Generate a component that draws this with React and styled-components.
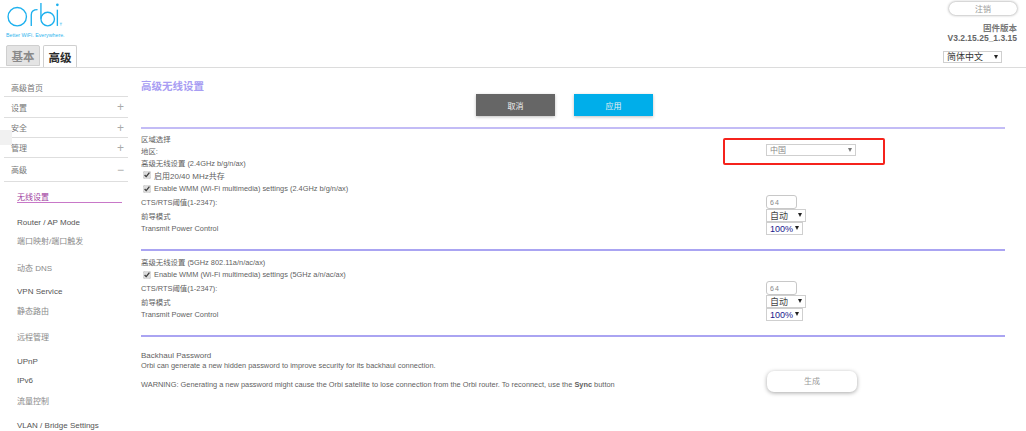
import React from 'react'
import styled, { createGlobalStyle } from 'styled-components'

const GlobalStyle = createGlobalStyle`
  html, body {
    margin: 0;
    padding: 0;
    background: #fff;
  }
  body {
    font-family: "Liberation Sans", "Noto Sans CJK SC", sans-serif;
    color: #5f5f5f;
  }
`

const Page = styled.div`
  width: 1026px;
  height: 431px;
  overflow: hidden;
  position: relative;
  background: #fff;
`

const Header = styled.header`
  height: 67px;
  border-bottom: 1px solid #dcdcdc;
  display: flex;
  justify-content: space-between;
`

const Brand = styled.div`
  display: flex;
  flex-direction: column;
  padding-left: 6px;
`

const Tagline = styled.span`
  font-size: 5.3px;
  line-height: 6px;
  color: #2fb5ee;
  margin-top: 3px;
  white-space: nowrap;
`

const Tabs = styled.div`
  display: flex;
  gap: 3px;
  margin-top: 7px;
`

const Tab = styled.div`
  width: 34px;
  height: ${(props) => (props.$active ? '22px' : '21px')};
  box-sizing: border-box;
  border: 1px solid #cfcfcf;
  border-bottom: ${(props) => (props.$active ? 'none' : '1px solid #cfcfcf')};
  border-radius: 2px 2px 0 0;
  background: ${(props) => (props.$active ? '#fff' : '#e4e4e4')};
  color: ${(props) => (props.$active ? '#2a2a2a' : '#8a8a8a')};
  font-size: 11.5px;
  font-weight: bold;
  display: flex;
  align-items: center;
  justify-content: center;
`

const TopRight = styled.div`
  width: 90px;
  display: flex;
  flex-direction: column;
  align-items: flex-end;
  padding: 2px 9px 0 0;
`

const LogoutButton = styled.div`
  width: 68px;
  height: 13px;
  border-radius: 7px;
  background: #fff;
  box-shadow: 0 0 3px rgba(0, 0, 0, 0.45);
  font-size: 8px;
  color: #999;
  display: flex;
  align-items: center;
  justify-content: center;
`

const FirmwareLabel = styled.div`
  font-size: 8.5px;
  line-height: 10px;
  font-weight: bold;
  color: #777;
  margin-top: 8px;
`

const FirmwareVersion = styled.div`
  font-size: 8.5px;
  line-height: 10px;
  font-weight: bold;
  color: #666;
  white-space: nowrap;
`

const LangSelect = styled.div`
  margin: 8px 15px 0 0;
`

const Body = styled.div`
  display: flex;
`

const Sidebar = styled.nav`
  width: 124px;
  padding: 11px 0 0 4px;
  margin-right: 13px;
  flex-shrink: 0;
`

const MenuItem = styled.div`
  height: ${(props) => props.$h}px;
  box-sizing: border-box;
  border-bottom: 1.5px solid #dedede;
  display: flex;
  align-items: center;
  justify-content: space-between;
  padding: 0 4px 0 7px;
  font-size: 8px;
  color: #777;
`

const MenuToggle = styled.span`
  font-size: 12px;
  font-weight: 300;
  color: #aaa;
`

const SubMenu = styled.div`
  padding: 8px 0 0 13px;
`

const SubItem = styled.div`
  height: 12px;
  margin-top: ${(props) => props.$gap}px;
  display: flex;
  align-items: center;
  font-size: 8px;
  color: ${(props) => (props.$zh ? '#8a8a8a' : '#555')};
  white-space: nowrap;
`

const ActiveItem = styled.div`
  height: 13px;
  box-sizing: border-box;
  margin-right: 6px;
  border-bottom: 1px solid #c878c8;
  display: flex;
  align-items: center;
  font-size: 8px;
  color: #a03ca0;
`

const CollapseHandle = styled.div`
  position: absolute;
  left: 0;
  top: 130px;
  width: 12px;
  height: 15px;
  background: #f1f1f1;
`

const Main = styled.main`
  width: 864px;
  padding-top: 11px;
`

const Title = styled.h1`
  margin: 0;
  height: 15px;
  font-size: 10.5px;
  line-height: 14px;
  font-weight: bold;
  color: #a89df3;
`

const ButtonRow = styled.div`
  display: flex;
  gap: 19px;
  padding-left: 335px;
`

const ActionButton = styled.div`
  width: 79px;
  height: 22px;
  background: ${(props) => props.$bg};
  color: #f0f0f0;
  font-size: 8px;
  display: flex;
  align-items: center;
  justify-content: center;
  box-shadow: 0 1px 3px rgba(0, 0, 0, 0.25);
`

const Rule = styled.hr`
  border: none;
  margin: ${(props) => props.$top}px 0 0;
  height: 2px;
  background: ${(props) => props.$color};
`

const Section = styled.section`
  padding-top: 3px;
`

const Row = styled.div`
  height: ${(props) => props.$h}px;
  display: grid;
  grid-template-columns: 625px 1fr;
  align-items: center;
  font-size: 7.4px;
  white-space: nowrap;
`

const CtsLabel = styled.span`
  margin-bottom: 2px;
`

const CheckLabel = styled.label`
  display: flex;
  align-items: center;
  gap: 3px;
  padding-left: 2px;
  font-size: ${(props) => props.$size || 7.4}px;
`

const Check = styled.input`
  width: 8px;
  height: 8px;
  margin: 0;
  accent-color: #dcdcdc;
`

const SelectWrap = styled.div`
  position: relative;
  width: ${(props) => props.$w}px;
  height: ${(props) => props.$h || 13}px;
`

const Select = styled.select`
  appearance: none;
  width: 100%;
  height: 100%;
  box-sizing: border-box;
  border: 1px solid #cfcfcf;
  border-radius: 0;
  background: #fff;
  color: ${(props) => props.$color || '#444'};
  font-family: inherit;
  font-size: ${(props) => props.$size || 9}px;
  padding: 0 0 0 3px;
  display: block;
`

const Arrow = styled.span`
  position: absolute;
  right: 4px;
  top: 4px;
  width: 0;
  height: 0;
  border-left: 2.5px solid transparent;
  border-right: 2.5px solid transparent;
  border-top: 4px solid ${(props) => props.$color || '#222'};
  pointer-events: none;
`

const Highlight = styled.div`
  position: absolute;
  left: -43px;
  top: -6px;
  width: 162px;
  height: 27px;
  box-sizing: border-box;
  border: 2px solid #f5231c;
  border-radius: 2px;
  pointer-events: none;
`

const TextInput = styled.input`
  width: 31px;
  height: 14px;
  box-sizing: border-box;
  border: 1px solid #c8c8c8;
  border-radius: 3px;
  font-family: inherit;
  font-size: 7px;
  letter-spacing: 1px;
  color: #888;
  padding: 0 3px;
  display: block;
`

const Backhaul = styled.section`
  display: grid;
  grid-template-columns: 626px 1fr;
  padding-top: 14px;
  font-size: 7.4px;
  line-height: 10px;
  white-space: nowrap;
`

const BackhaulTitle = styled.p`
  margin: 0;
  font-size: 8px;
`

const BackhaulNote = styled.p`
  margin: ${(props) => props.$top || 0}px 0 0;
`

const GenerateButton = styled.div`
  width: 90px;
  height: 21px;
  margin-top: 20px;
  border-radius: 7px;
  background: #fff;
  box-shadow: 0 1px 4px rgba(0, 0, 0, 0.35);
  color: #999;
  font-size: 8px;
  display: flex;
  align-items: center;
  justify-content: center;
`

const OrbiLogo = () => (
  <svg width="66" height="30" viewBox="0 0 66 30" fill="none" stroke="#1cb0ee" strokeWidth="1.4" style={{ display: 'block' }}>
    <circle cx="10.500" cy="17.300" r="9.500" />
    <path d="M25 26.800V15.500C25 11.800 27.500 10 31.500 10" />
    <path d="M35 3V19.500" />
    <circle cx="42" cy="19.700" r="7" />
    <path d="M52 10V26.800" />
    <circle cx="52" cy="5" r="0.700" fill="#1cb0ee" />
    <path d="M54.500 24H57M55.700 24V26.500" strokeWidth="0.5" />
  </svg>
)

const Dropdown = ({ w, h, value, color, size, arrowColor }) => (
  <SelectWrap $w={w} $h={h}>
    <Select $color={color} $size={size} defaultValue={value}>
      <option>{value}</option>
    </Select>
    <Arrow $color={arrowColor} />
  </SelectWrap>
)

const WirelessRows = ({ wmmLabel }) => (
  <>
    <Row $h={13}>
      <CheckLabel>
        <Check type="checkbox" defaultChecked />
        {wmmLabel}
      </CheckLabel>
    </Row>
    <Row $h={14}>
      <CtsLabel>CTS/RTS阈值(1-2347):</CtsLabel>
      <TextInput defaultValue="64" />
    </Row>
    <Row $h={13}>
      <span>前导模式</span>
      <Dropdown w={40} value="自动" />
    </Row>
    <Row $h={13}>
      <span>Transmit Power Control</span>
      <Dropdown w={37} value="100%" color="#1a1a8c" />
    </Row>
  </>
)

const subItems = [
  { label: 'Router / AP Mode', gap: 13 },
  { label: '端口映射/端口触发', gap: 6, zh: true },
  { label: '动态 DNS', gap: 15, zh: true },
  { label: 'VPN Service', gap: 12 },
  { label: '静态路由', gap: 7, zh: true },
  { label: '远程管理', gap: 14, zh: true },
  { label: 'UPnP', gap: 13 },
  { label: 'IPv6', gap: 7 },
  { label: '流量控制', gap: 8, zh: true },
  { label: 'VLAN / Bridge Settings', gap: 13 },
]

const App = () => (
  <Page>
    <GlobalStyle />
    <Header>
      <Brand>
        <OrbiLogo />
        <Tagline>Better WiFi. Everywhere.</Tagline>
        <Tabs>
          <Tab>基本</Tab>
          <Tab $active>高级</Tab>
        </Tabs>
      </Brand>
      <TopRight>
        <LogoutButton>注销</LogoutButton>
        <FirmwareLabel>固件版本</FirmwareLabel>
        <FirmwareVersion>V3.2.15.25_1.3.15</FirmwareVersion>
        <LangSelect>
          <Dropdown w={59} h={12} value="简体中文" color="#333" />
        </LangSelect>
      </TopRight>
    </Header>
    <CollapseHandle />
    <Body>
      <Sidebar>
        <MenuItem $h={18}>高级首页</MenuItem>
        <MenuItem $h={21}>设置<MenuToggle>+</MenuToggle></MenuItem>
        <MenuItem $h={20}>安全<MenuToggle>+</MenuToggle></MenuItem>
        <MenuItem $h={20}>管理<MenuToggle>+</MenuToggle></MenuItem>
        <MenuItem $h={24}>高级<MenuToggle>−</MenuToggle></MenuItem>
        <SubMenu>
          <ActiveItem>无线设置</ActiveItem>
          {subItems.map((item) => (
            <SubItem key={item.label} $gap={item.gap} $zh={item.zh}>{item.label}</SubItem>
          ))}
        </SubMenu>
      </Sidebar>
      <Main>
        <Title>高级无线设置</Title>
        <ButtonRow>
          <ActionButton $bg="#666666">取消</ActionButton>
          <ActionButton $bg="#00aeea">应用</ActionButton>
        </ButtonRow>
        <Rule $top={11} $color="#c3bcf6" />
        <Section>
          <Row $h={12}>区域选择</Row>
          <Row $h={12}>
            <span>地区:</span>
            <SelectWrap $w={90} $h={12}>
              <Select $color="#888" $size={8} defaultValue="中国">
                <option>中国</option>
              </Select>
              <Arrow $color="#777" />
              <Highlight />
            </SelectWrap>
          </Row>
          <Row $h={12}>高级无线设置 (2.4GHz b/g/n/ax)</Row>
          <Row $h={14}>
            <CheckLabel $size={8}>
              <Check type="checkbox" defaultChecked />
              启用20/40 MHz共存
            </CheckLabel>
          </Row>
          <WirelessRows wmmLabel="Enable WMM (Wi-Fi multimedia) settings (2.4GHz b/g/n/ax)" />
        </Section>
        <Rule $top={14} $color="#aaa4f2" />
        <Section>
          <Row $h={14}>高级无线设置 (5GHz 802.11a/n/ac/ax)</Row>
          <WirelessRows wmmLabel="Enable WMM (Wi-Fi multimedia) settings (5GHz a/n/ac/ax)" />
        </Section>
        <Rule $top={14} $color="#aaa4f2" />
        <Backhaul>
          <div>
            <BackhaulTitle>Backhaul Password</BackhaulTitle>
            <BackhaulNote>Orbi can generate a new hidden password to improve security for its backhaul connection.</BackhaulNote>
            <BackhaulNote $top={9}>WARNING: Generating a new password might cause the Orbi satellite to lose connection from the Orbi router. To reconnect, use the <b>Sync</b> button</BackhaulNote>
          </div>
          <GenerateButton>生成</GenerateButton>
        </Backhaul>
      </Main>
    </Body>
  </Page>
)

export default App
